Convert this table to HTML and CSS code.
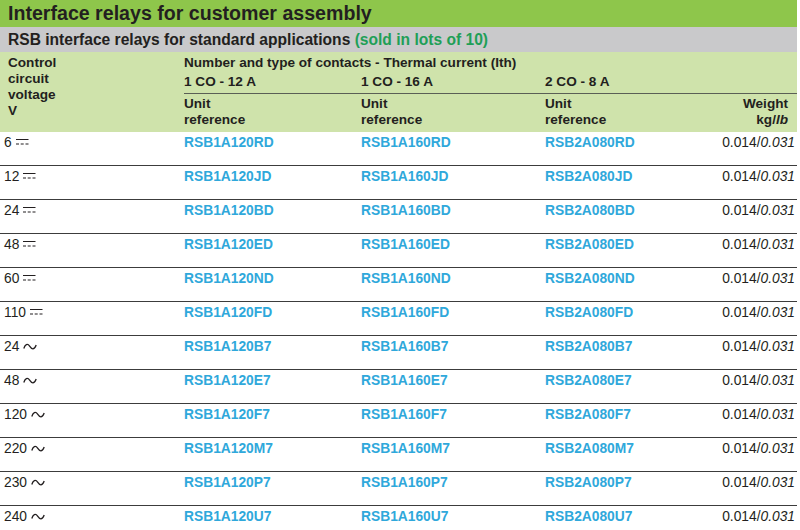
FILE: index.html
```html
<!DOCTYPE html>
<html>
<head>
<meta charset="utf-8">
<link rel="stylesheet" href="styles.css">
</head>
<body>
<div class="page">
  <div class="title">Interface relays for customer assembly</div>
  <div class="subtitle">RSB interface relays for standard applications <span class="lots">(sold in lots of 10)</span></div>
  <table class="relays">
    <colgroup>
      <col class="c1"><col class="c2"><col class="c3"><col class="c4"><col class="c5">
    </colgroup>
    <thead>
      <tr class="h1">
        <th rowspan="3" class="volt">Control<br>circuit<br>voltage<br>V</th>
        <th colspan="4">Number and type of contacts - Thermal current (Ith)</th>
      </tr>
      <tr class="h2">
        <th>1 CO - 12 A</th>
        <th>1 CO - 16 A</th>
        <th>2 CO - 8 A</th>
        <th></th>
      </tr>
      <tr class="h3">
        <th>Unit<br>reference</th>
        <th>Unit<br>reference</th>
        <th>Unit<br>reference</th>
        <th class="wt">Weight<br>kg/<i>lb</i></th>
      </tr>
    </thead>
    <tbody>
      <tr><td class="v">6 <span class="dc"><svg width="13" height="8" viewBox="0 0 13 8"><path d="M0 1.5H12.5M0 6H3M4.7 6H7.7M9.5 6H12.5"/></svg></span></td><td class="ref">RSB1A120RD</td><td class="ref">RSB1A160RD</td><td class="ref">RSB2A080RD</td><td class="w">0.014/<i>0.031</i></td></tr>
      <tr><td class="v">12 <span class="dc"><svg width="13" height="8" viewBox="0 0 13 8"><path d="M0 1.5H12.5M0 6H3M4.7 6H7.7M9.5 6H12.5"/></svg></span></td><td class="ref">RSB1A120JD</td><td class="ref">RSB1A160JD</td><td class="ref">RSB2A080JD</td><td class="w">0.014/<i>0.031</i></td></tr>
      <tr><td class="v">24 <span class="dc"><svg width="13" height="8" viewBox="0 0 13 8"><path d="M0 1.5H12.5M0 6H3M4.7 6H7.7M9.5 6H12.5"/></svg></span></td><td class="ref">RSB1A120BD</td><td class="ref">RSB1A160BD</td><td class="ref">RSB2A080BD</td><td class="w">0.014/<i>0.031</i></td></tr>
      <tr><td class="v">48 <span class="dc"><svg width="13" height="8" viewBox="0 0 13 8"><path d="M0 1.5H12.5M0 6H3M4.7 6H7.7M9.5 6H12.5"/></svg></span></td><td class="ref">RSB1A120ED</td><td class="ref">RSB1A160ED</td><td class="ref">RSB2A080ED</td><td class="w">0.014/<i>0.031</i></td></tr>
      <tr><td class="v">60 <span class="dc"><svg width="13" height="8" viewBox="0 0 13 8"><path d="M0 1.5H12.5M0 6H3M4.7 6H7.7M9.5 6H12.5"/></svg></span></td><td class="ref">RSB1A120ND</td><td class="ref">RSB1A160ND</td><td class="ref">RSB2A080ND</td><td class="w">0.014/<i>0.031</i></td></tr>
      <tr><td class="v">110 <span class="dc"><svg width="13" height="8" viewBox="0 0 13 8"><path d="M0 1.5H12.5M0 6H3M4.7 6H7.7M9.5 6H12.5"/></svg></span></td><td class="ref">RSB1A120FD</td><td class="ref">RSB1A160FD</td><td class="ref">RSB2A080FD</td><td class="w">0.014/<i>0.031</i></td></tr>
      <tr><td class="v">24 <span class="ac"><svg width="14" height="9" viewBox="0 0 14 9"><path d="M0.8 6.5C2 2.5 4.5 1 6.6 4.2S11 8.6 13.2 3"/></svg></span></td><td class="ref">RSB1A120B7</td><td class="ref">RSB1A160B7</td><td class="ref">RSB2A080B7</td><td class="w">0.014/<i>0.031</i></td></tr>
      <tr><td class="v">48 <span class="ac"><svg width="14" height="9" viewBox="0 0 14 9"><path d="M0.8 6.5C2 2.5 4.5 1 6.6 4.2S11 8.6 13.2 3"/></svg></span></td><td class="ref">RSB1A120E7</td><td class="ref">RSB1A160E7</td><td class="ref">RSB2A080E7</td><td class="w">0.014/<i>0.031</i></td></tr>
      <tr><td class="v">120 <span class="ac"><svg width="14" height="9" viewBox="0 0 14 9"><path d="M0.8 6.5C2 2.5 4.5 1 6.6 4.2S11 8.6 13.2 3"/></svg></span></td><td class="ref">RSB1A120F7</td><td class="ref">RSB1A160F7</td><td class="ref">RSB2A080F7</td><td class="w">0.014/<i>0.031</i></td></tr>
      <tr><td class="v">220 <span class="ac"><svg width="14" height="9" viewBox="0 0 14 9"><path d="M0.8 6.5C2 2.5 4.5 1 6.6 4.2S11 8.6 13.2 3"/></svg></span></td><td class="ref">RSB1A120M7</td><td class="ref">RSB1A160M7</td><td class="ref">RSB2A080M7</td><td class="w">0.014/<i>0.031</i></td></tr>
      <tr><td class="v">230 <span class="ac"><svg width="14" height="9" viewBox="0 0 14 9"><path d="M0.8 6.5C2 2.5 4.5 1 6.6 4.2S11 8.6 13.2 3"/></svg></span></td><td class="ref">RSB1A120P7</td><td class="ref">RSB1A160P7</td><td class="ref">RSB2A080P7</td><td class="w">0.014/<i>0.031</i></td></tr>
      <tr><td class="v">240 <span class="ac"><svg width="14" height="9" viewBox="0 0 14 9"><path d="M0.8 6.5C2 2.5 4.5 1 6.6 4.2S11 8.6 13.2 3"/></svg></span></td><td class="ref">RSB1A120U7</td><td class="ref">RSB1A160U7</td><td class="ref">RSB2A080U7</td><td class="w">0.014/<i>0.031</i></td></tr>
    </tbody>
  </table>
</div>
</body>
</html>
```

FILE: styles.css
```css
* { box-sizing: border-box; }
html, body {
  margin: 0;
  padding: 0;
  background: #ffffff;
}
body {
  font-family: "Liberation Sans", Arial, sans-serif;
  color: #231f20;
  overflow: hidden;
}
.page {
  width: 797px;
}
.title {
  height: 27px;
  background: #8ec64b;
  font-weight: bold;
  font-size: 19.6px;
  line-height: 27px;
  padding-left: 8px;
  white-space: nowrap;
}
.subtitle {
  height: 25px;
  background: #c9c9cb;
  font-weight: bold;
  font-size: 15.6px;
  line-height: 25px;
  padding-left: 8px;
  white-space: nowrap;
}
.lots {
  color: #1f9f57;
}
.relays {
  width: 797px;
  table-layout: fixed;
  border-collapse: collapse;
  border-spacing: 0;
}
.c1 { width: 184px; }
.c2 { width: 177px; }
.c3 { width: 184px; }
.c4 { width: 140px; }
.c5 { width: 112px; }

.relays thead th {
  background: #cfe3ab;
  font-weight: bold;
  font-size: 13.6px;
  line-height: 16px;
  text-align: left;
  vertical-align: top;
  padding: 0;
  white-space: nowrap;
}
.relays thead th.volt {
  padding: 3px 0 0 8px;
}
.h1 th { padding-top: 3px !important; height: 19px; }
.h2 th {
  padding-top: 3px !important;
  padding-bottom: 2px !important;
  border-bottom: 1px solid #5a5f55;
  height: 22px;
}
.h3 th {
  padding-top: 2px !important;
  padding-bottom: 4px !important;
  height: 38px;
}
.relays thead th.wt {
  text-align: right;
  padding-right: 9px;
}
.relays tbody td {
  font-size: 13.8px;
  line-height: 16px;
  padding: 3px 0 14px 0;
  vertical-align: top;
  border-bottom: 1px solid #3c3c3c;
  white-space: nowrap;
  height: 34px;
}
.relays tbody td.v {
  padding-left: 4px;
}
.relays tbody td.ref {
  color: #2fa8db;
  font-weight: bold;
}
.relays tbody td.w {
  text-align: right;
  padding-right: 2px;
}
.dc svg, .ac svg {
  fill: none;
  stroke: #231f20;
  stroke-width: 1.1;
  vertical-align: middle;
  position: relative;
  top: -1px;
}
.ac svg {
  stroke-width: 1.3;
}
```
